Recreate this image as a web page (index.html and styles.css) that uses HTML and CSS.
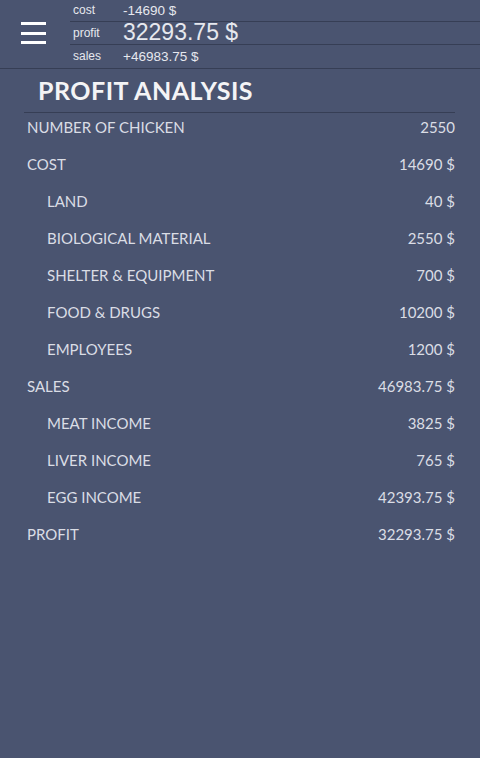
FILE: index.html
```html
<!DOCTYPE html>
<html>
<head>
<meta charset="utf-8">
<link rel="stylesheet" href="styles.css">
</head>
<body>
<header class="topbar">
  <div class="menu">
    <span class="bar"></span><span class="bar"></span><span class="bar"></span>
  </div>
  <div class="summary">
    <div class="srow"><span class="skey">cost</span><span class="sval">-14690 $</span></div>
    <div class="srow big"><span class="skey">profit</span><span class="sval">32293.75 $</span></div>
    <div class="srow last"><span class="skey">sales</span><span class="sval">+46983.75 $</span></div>
  </div>
</header>
<main class="content">
  <h1 class="title">PROFIT ANALYSIS</h1>
  <div class="table">
    <div class="row"><span>NUMBER OF CHICKEN</span><span>2550</span></div>
    <div class="row"><span>COST</span><span>14690 $</span></div>
    <div class="row sub"><span>LAND</span><span>40 $</span></div>
    <div class="row sub"><span>BIOLOGICAL MATERIAL</span><span>2550 $</span></div>
    <div class="row sub"><span>SHELTER &amp; EQUIPMENT</span><span>700 $</span></div>
    <div class="row sub"><span>FOOD &amp; DRUGS</span><span>10200 $</span></div>
    <div class="row sub"><span>EMPLOYEES</span><span>1200 $</span></div>
    <div class="row"><span>SALES</span><span>46983.75 $</span></div>
    <div class="row sub"><span>MEAT INCOME</span><span>3825 $</span></div>
    <div class="row sub"><span>LIVER INCOME</span><span>765 $</span></div>
    <div class="row sub"><span>EGG INCOME</span><span>42393.75 $</span></div>
    <div class="row"><span>PROFIT</span><span>32293.75 $</span></div>
  </div>
</main>
</body>
</html>
```
FILE: styles.css
```css
html, body {
  margin: 0;
  padding: 0;
  background: #4a5470;
  height: 100%;
}
body {
  font-family: "Lato", "Open Sans", sans-serif;
  color: #dadde5;
}
.topbar {
  display: flex;
  height: 68px;
  border-bottom: 1px solid #363e55;
}
.menu {
  width: 70px;
  flex: none;
  display: flex;
  flex-direction: column;
  justify-content: center;
  align-items: flex-start;
  gap: 6.5px;
  padding-left: 21px;
  box-sizing: border-box;
  padding-bottom: 2px;
}
.bar {
  display: block;
  width: 25px;
  height: 3px;
  background: #ffffff;
}
.summary {
  flex: 1;
  display: flex;
  flex-direction: column;
  font-family: "Liberation Sans", Arial, sans-serif;
}
.srow {
  display: flex;
  align-items: center;
  height: 21px;
  border-bottom: 1px solid #363e55;
  padding-left: 3px;
}
.srow.big { height: 22px; }
.srow.last { border-bottom: none; height: 24px; }
.skey {
  width: 50px;
  font-size: 12px;
  color: #e6e8ee;
}
.sval {
  font-size: 13.5px;
  color: #e6e8ee;
}
.big .sval {
  font-size: 23px;
}
.content {
  padding: 0 25px 0 24px;
}
.title {
  margin: 0;
  padding: 5px 0 6px 14px;
  font-size: 25px;
  font-weight: 700;
  color: #f4f4f6;
  border-bottom: 1px solid #363e55;
  line-height: 32px;
  letter-spacing: 0.5px;
}
.table {
  margin-top: -5px;
}
.row {
  display: flex;
  justify-content: space-between;
  align-items: center;
  height: 37px;
  padding-left: 3px;
  font-size: 15px;
}
.row.sub {
  padding-left: 23px;
}
```
